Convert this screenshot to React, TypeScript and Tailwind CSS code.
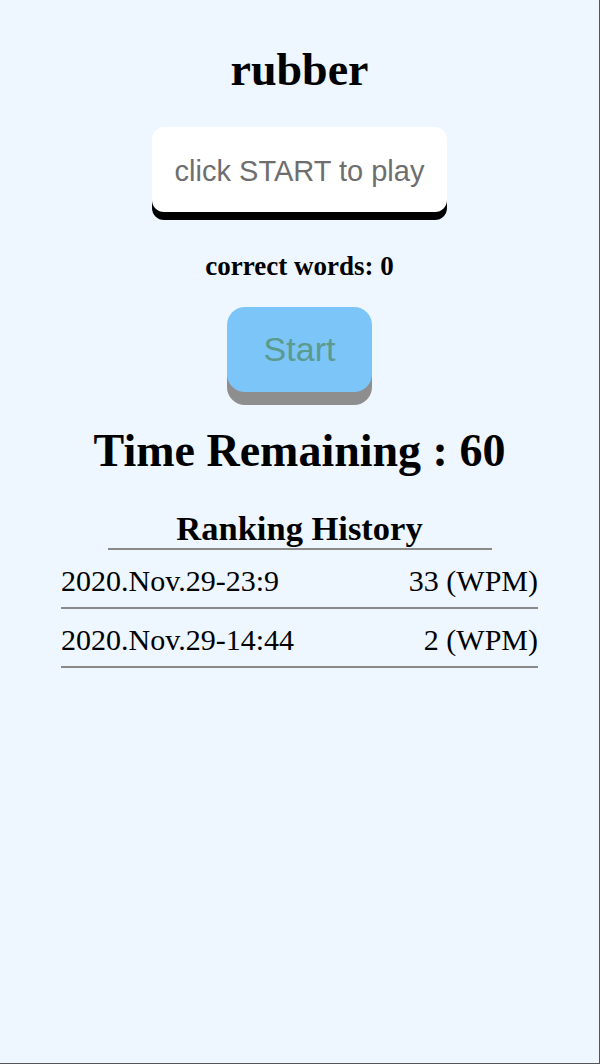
import React from 'react';

const history = [
  { date: '2020.Nov.29-23:9', wpm: 33 },
  { date: '2020.Nov.29-14:44', wpm: 2 },
];

const serif = { fontFamily: '"Liberation Serif", "Times New Roman", serif' };

export default function App() {
  return (
    <div
      className="w-[600px] h-[1064px] bg-[#eef6ff] border-r border-b border-[#555] flex flex-col items-center text-black"
      style={serif}
    >
      <h1 className="mt-[43px] text-[46px] leading-[53px] font-bold">rubber</h1>

      <div className="mt-[31px] w-[295px] h-[85px] bg-white rounded-[12px] shadow-[0_8px_0_#000] flex items-center justify-center pt-[4px]">
        <span className="text-[29px] text-[#6e6e6e] font-['Liberation_Sans',Arial,sans-serif]">
          click START to play
        </span>
      </div>

      <p className="mt-[39px] text-[27px] leading-[31px] font-bold">correct words: 0</p>

      <button className="mt-[25px] w-[145px] h-[85px] bg-[#7cc5f9] rounded-[18px] shadow-[0_13px_0_#8e8e8e] flex items-center justify-center">
        <span className="text-[34px] text-[#5b9a8c] font-['Liberation_Sans',Arial,sans-serif]">Start</span>
      </button>

      <h2 className="mt-[32px] text-[46px] leading-[53px] font-bold">Time Remaining : 60</h2>

      <h3 className="mt-[32px] w-[384px] text-center text-[34.5px] leading-[39px] font-bold border-b-2 border-[#8a8a8a]">
        Ranking History
      </h3>

      <ul className="w-[477px]">
        {history.map((h) => (
          <li
            key={h.date}
            className="flex justify-between pt-[15px] pb-[10px] text-[30px] leading-[32px] border-b-2 border-[#8a8a8a]"
          >
            <span>{h.date}</span>
            <span>{h.wpm} (WPM)</span>
          </li>
        ))}
      </ul>
    </div>
  );
}
